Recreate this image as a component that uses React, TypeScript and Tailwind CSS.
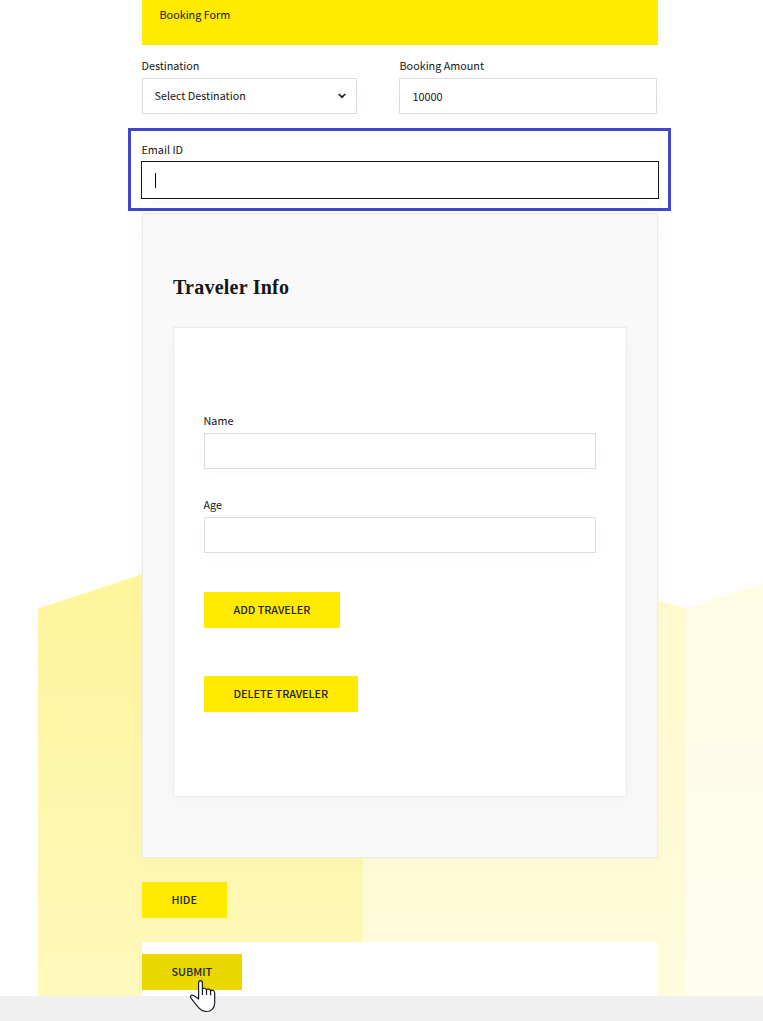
import type { ReactNode } from "react";

function Label({ children, className = "" }: { children: ReactNode; className?: string }) {
  return (
    <label className={`block h-6 w-max text-[10.8px] leading-[23px] text-[#161616] ${className}`}>{children}</label>
  );
}

function Button({ children, className }: { children: ReactNode; className: string }) {
  return (
    <button
      type="button"
      className={`block h-9 whitespace-nowrap pb-0.5 pl-[29.5px] text-left text-[10.8px] font-medium leading-[34px] text-[#222] ${className}`}
    >
      {children}
    </button>
  );
}

function Field({ label, className = "" }: { label: string; className?: string }) {
  return (
    <div className={className}>
      <Label className="-ml-[0.5px]">{label}</Label>
      <div className="h-9 border border-[#dcdcdc] bg-white shadow-[0_5px_15px_rgba(0,0,0,0.025)]" />
    </div>
  );
}

function Backdrop() {
  return (
    <svg className="absolute left-0 top-0" width="763" height="996" viewBox="0 0 763 996" aria-hidden="true">
      <defs>
        <linearGradient id="strong" x1="0" y1="570" x2="0" y2="996" gradientUnits="userSpaceOnUse">
          <stop offset="0" stopColor="#fff59b" />
          <stop offset="1" stopColor="#fef8bc" />
        </linearGradient>
        <linearGradient id="soft" x1="0" y1="570" x2="0" y2="996" gradientUnits="userSpaceOnUse">
          <stop offset="0" stopColor="#fffacd" />
          <stop offset="1" stopColor="#fffbdc" />
        </linearGradient>
        <linearGradient id="faint" x1="0" y1="570" x2="0" y2="996" gradientUnits="userSpaceOnUse">
          <stop offset="0" stopColor="#fffce4" />
          <stop offset="1" stopColor="#fffdf0" />
        </linearGradient>
      </defs>
      <path d="M38 608.5L363 502V996H38Z" fill="url(#strong)" />
      <path d="M363 511L686 608.5V996H363Z" fill="url(#soft)" />
      <path d="M686 608.5L763 583V996H686Z" fill="url(#faint)" />
    </svg>
  );
}

export default function App() {
  return (
    <div className="relative h-[1021px] w-[763px] overflow-hidden bg-white font-['Noto_Sans_CJK_SC','Noto_Sans',sans-serif] text-[#161616]">
      <Backdrop />
      <main className="relative flex h-[996px] flex-col pl-[142px] pr-[105px]">
        <header className="h-[45px] shrink-0 bg-[#ffea00] pl-[17.5px] pt-[3px]">
          <p className="w-max text-[10.8px] leading-[23px]">Booking Form</p>
        </header>

        <div className="flex shrink-0 gap-[42px] pt-[9px]">
          <div className="w-[215px]">
            <Label className="-ml-[0.5px]">Destination</Label>
            <div className="flex h-9 items-center justify-between border border-[#dcdcdc] bg-white pl-[11.5px] pr-2.5 text-[10.8px] shadow-[0_5px_15px_rgba(0,0,0,0.025)]">
              <span className="pb-px">Select Destination</span>
              <svg width="8" height="6" viewBox="0 0 8 6" fill="none" stroke="#222" strokeWidth="1.7">
                <path d="M.7 1L4 4.2L7.3 1" />
              </svg>
            </div>
          </div>
          <div className="w-[258px]">
            <Label className="ml-[0.5px]">Booking Amount</Label>
            <div className="flex h-9 items-center border border-[#dcdcdc] bg-white pl-[12.5px] pt-px text-[10.8px] shadow-[0_5px_15px_rgba(0,0,0,0.025)]">
              <span>10000</span>
            </div>
          </div>
        </div>

        <section className="-ml-3.5 mt-3.5 h-[83px] w-[543px] shrink-0 border-[3px] border-[#3f48cc] bg-white px-2.5 pt-[7px]">
          <Label className="ml-[0.5px]">Email ID</Label>
          <div className="-mt-px flex h-[38px] w-[518px] items-center border border-[#161616] bg-white pl-[13px] shadow-[0_5px_15px_rgba(0,0,0,0.025)]">
            <span className="h-[15px] w-px bg-black" />
          </div>
        </section>

        <section className="mt-0.5 h-[645px] shrink-0 border border-[#ebebeb] bg-[#f9f9f9] px-[30px] pt-[59px] shadow-[0_5px_20px_rgba(0,0,0,0.025)]">
          <h2 className="h-[54px] w-max font-['Source_Serif_Pro','Liberation_Serif',serif] text-[20px] font-bold leading-[28px] tracking-[0.23px]">
            Traveler Info
          </h2>
          <div className="h-[470px] border border-[#ebebeb] bg-white px-[30px] pt-[81px] shadow-[0_5px_20px_rgba(0,0,0,0.025)]">
            <Field label="Name" />
            <Field label="Age" className="mt-6" />
            <Button className="mt-[39px] w-[136px] bg-[#ffea00]">ADD TRAVELER</Button>
            <Button className="mt-12 w-[154px] bg-[#ffea00]">DELETE TRAVELER</Button>
          </div>
        </section>

        <Button className="mt-6 w-[85px] shrink-0 bg-[#ffea00]">HIDE</Button>
        <div className="mt-6 h-[54px] shrink-0 bg-white pt-3">
          <Button className="w-[100px] bg-[#ebd800]">SUBMIT</Button>
        </div>
      </main>
      <footer className="relative h-[25px] bg-[#f0f0f0]" />
      <svg
        className="absolute left-[189px] top-[979px]"
        width="28"
        height="34"
        viewBox="0 0 28 34"
        fill="white"
        stroke="#1b1b2e"
        strokeWidth="1.2"
        strokeLinejoin="round"
        strokeLinecap="round"
        aria-hidden="true"
      >
        <path d="M9.6 20V3.8C9.6 .9 13.4 .9 13.4 3.8V10C14 8.7 17.4 8.9 17.5 11C18.5 9.4 21.4 9.8 21.6 11.8C23.3 10.6 25.7 11.4 25.7 14V24C25.7 29 22.3 32.5 17.5 32.5C13.4 32.5 10.8 30.4 8.5 27.4L2.3 19.7C.3 17 2.5 15.1 5 16.8Z" />
        <path d="M13.4 9.8V15.5M17.5 11V15.5M21.6 12V15.8" fill="none" />
      </svg>
    </div>
  );
}
